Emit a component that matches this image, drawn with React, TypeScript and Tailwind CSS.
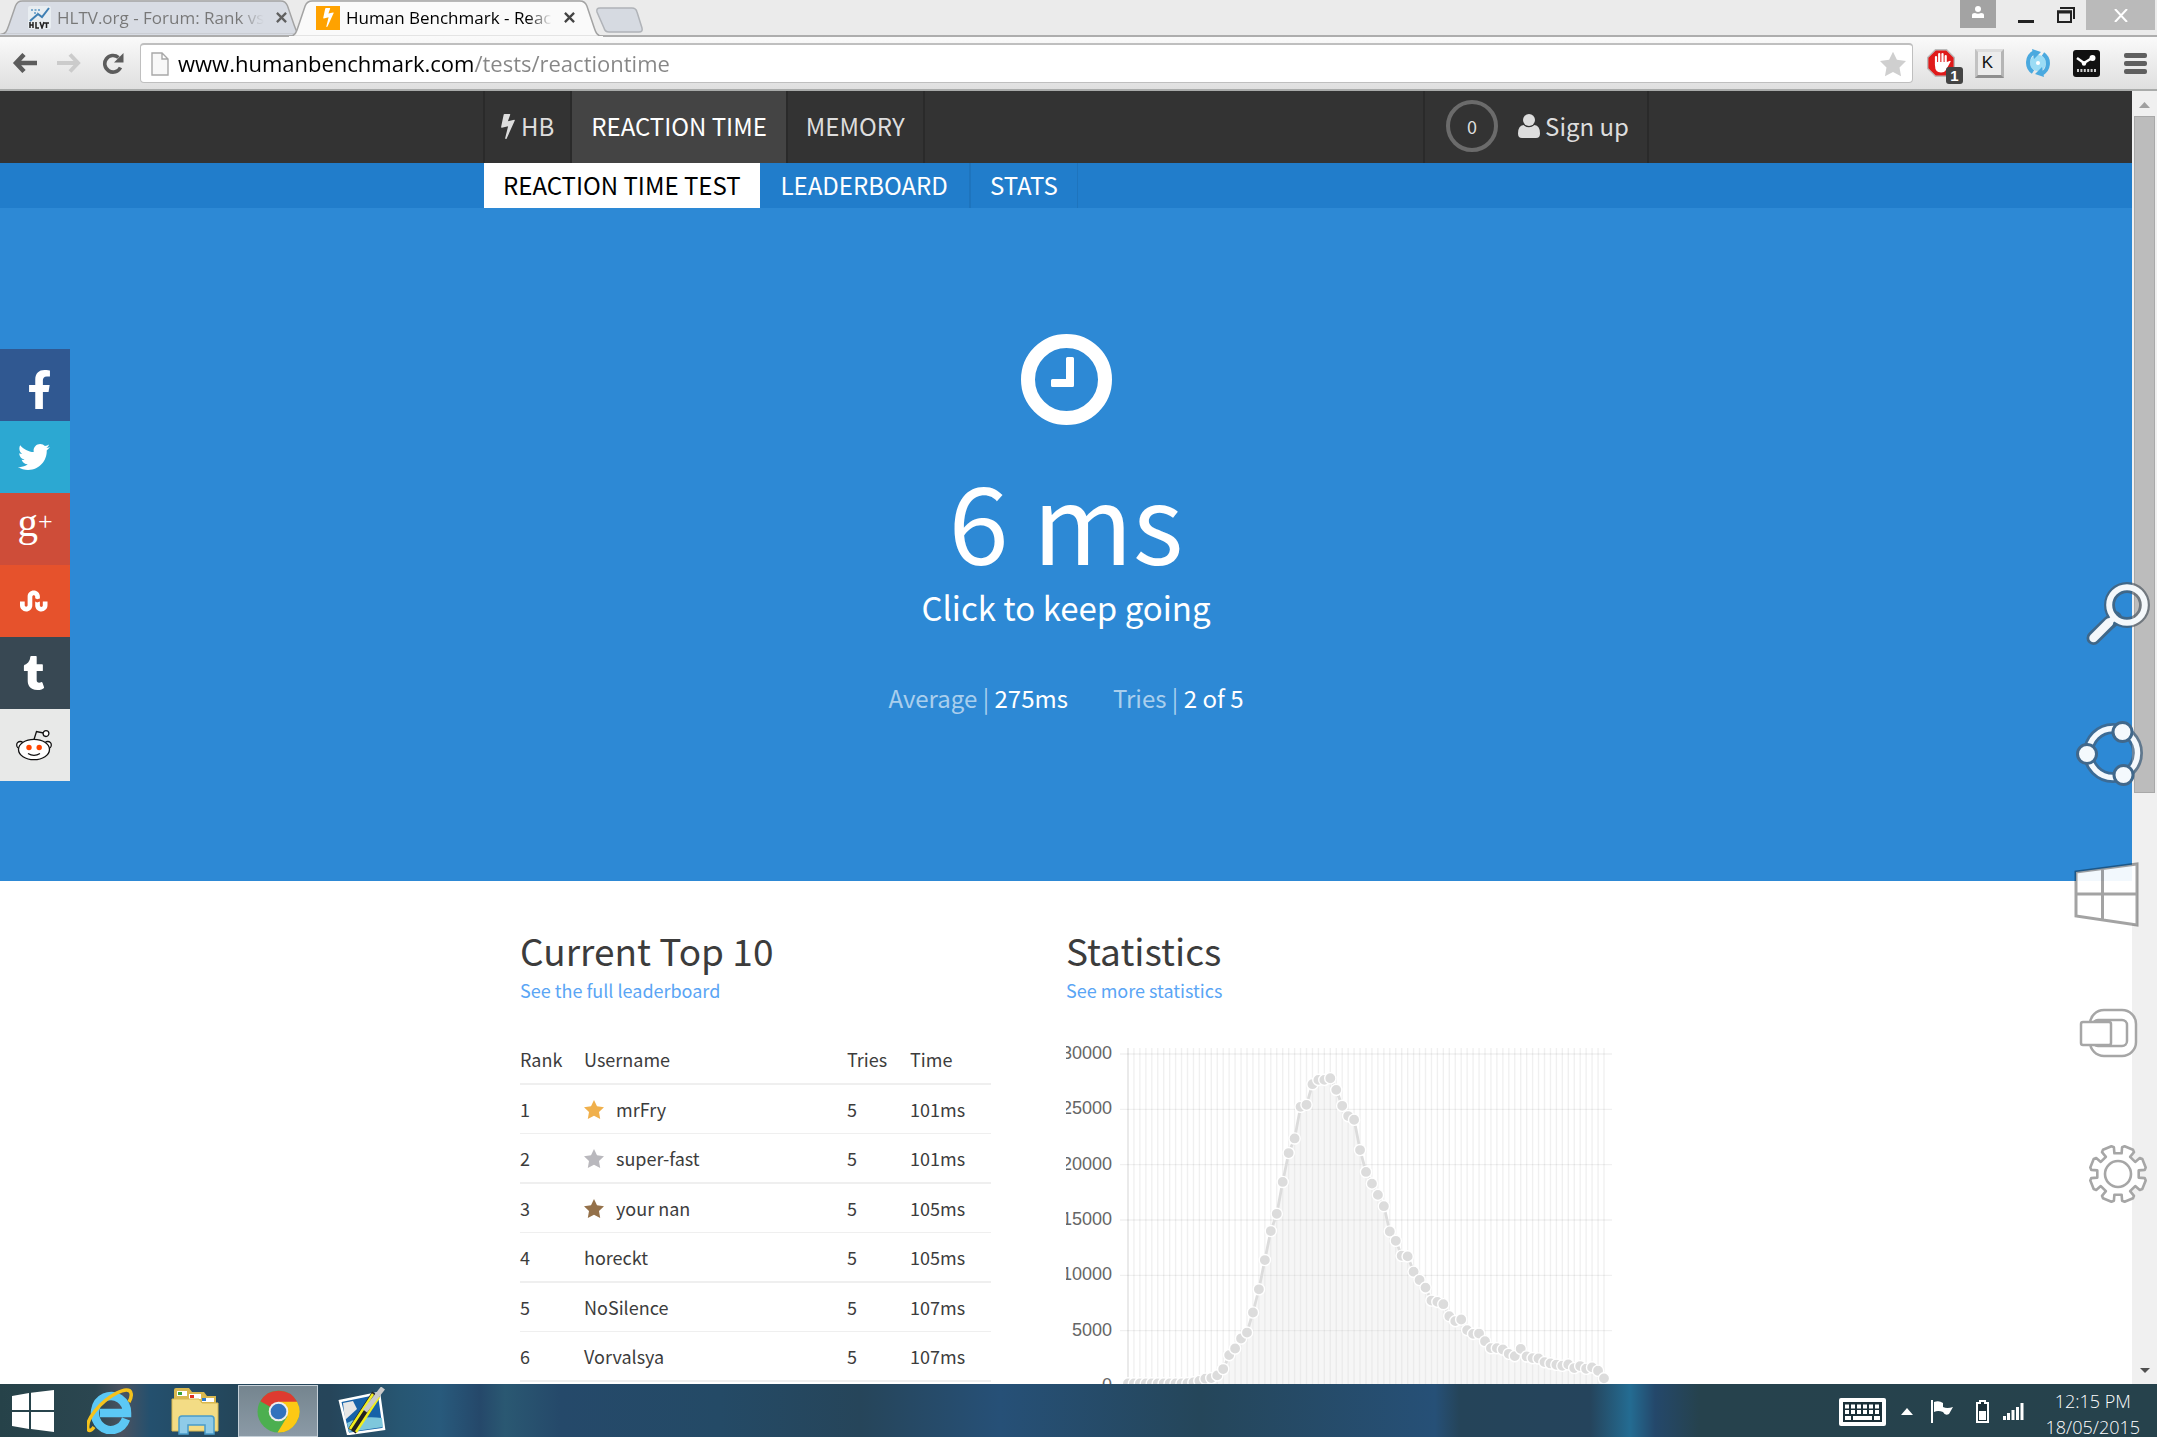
import React from 'react'
import { FaFacebookF, FaTwitter, FaStumbleupon, FaTumblr } from 'react-icons/fa'

interface Player {
  rank: number
  name: string
  tries: number
  time: string
  star?: string
}

const players: Player[] = [
  { rank: 1, name: 'mrFry', tries: 5, time: '101ms', star: 'text-[#f0b04c]' },
  { rank: 2, name: 'super-fast', tries: 5, time: '101ms', star: 'text-[#b9b8bd]' },
  { rank: 3, name: 'your nan', tries: 5, time: '105ms', star: 'text-[#94714a]' },
  { rank: 4, name: 'horeckt', tries: 5, time: '105ms' },
  { rank: 5, name: 'NoSilence', tries: 5, time: '107ms' },
  { rank: 6, name: 'Vorvalsya', tries: 5, time: '107ms' },
]

// number of results per bucket, fastest first
const results = [
  240, 240, 240, 240, 240, 240, 240, 240, 240, 240, 260, 330, 450, 660, 720, 960, 1530, 2790, 3390, 4290,
  4830, 6640, 8740, 11380, 14000, 15560, 18440, 21050, 22370, 25230, 25410, 27270, 27660, 27660, 27810,
  26760, 25320, 24390, 24060, 21320, 19340, 18290, 17270, 16250, 13960, 13120, 11770, 11710, 10330, 9580,
  8890, 7720, 7600, 7390, 6310, 5860, 6010, 5050, 4710, 4740, 4050, 3420, 3420, 3300, 2910, 2700, 3360,
  2670, 2520, 2490, 2160, 2040, 1920, 1830, 1950, 1620, 1800, 1560, 1680, 1380, 690,
]

const CHART = { left: 62, right: 538, base: 351, top: 19, max: 30000 }

function StatsChart() {
  const step = (CHART.right - CHART.left) / (results.length - 1)
  const px = (i: number) => CHART.left + i * step
  const py = (v: number) => CHART.base - (v / CHART.max) * (CHART.base - CHART.top)
  const line = results.map((v, i) => `${px(i).toFixed(1)},${py(v).toFixed(1)}`).join(' ')
  const ticks = [0, 5000, 10000, 15000, 20000, 25000, 30000]

  return (
    <svg viewBox="0 0 546 400" className="block w-full" role="img" aria-label="Reaction time distribution">
      {results.map((_, i) => (
        <line key={i} x1={px(i)} x2={px(i)} y1="13" y2="358" stroke="#000" strokeOpacity={i === 0 ? 0.12 : 0.06} strokeWidth="1.4" />
      ))}
      {ticks.map(t => (
        <g key={t}>
          <line x1="54" x2="546" y1={py(t)} y2={py(t)} stroke="#000" strokeOpacity="0.06" strokeWidth="1.4" />
          <text x="46" y={py(t) + 5} textAnchor="end" fill="#666" className="font-['Liberation_Sans',sans-serif] text-[18px]">
            {t}
          </text>
        </g>
      ))}
      <polygon points={`${CHART.left},${CHART.base} ${line} ${CHART.right},${CHART.base}`} fill="#dcdcdc" fillOpacity="0.25" />
      <polyline points={line} fill="none" stroke="#dcdcdc" strokeWidth="2.8" />
      {results.map((v, i) => (
        <circle key={i} cx={px(i)} cy={py(v)} r="5.6" fill="#dcdcdc" stroke="#fff" strokeWidth="1.4" />
      ))}
    </svg>
  )
}

function Star({ className }: { className: string }) {
  return (
    <svg viewBox="0 0 20 19" className={className} fill="currentColor">
      <path d="M10 0l3 6.3 7 .9-5 4.9 1.200 6.900L10 15.700 3.800 19 5 12.100 0 7.200l7-.9z" />
    </svg>
  )
}

function Bolt({ className }: { className: string }) {
  return (
    <svg viewBox="0 0 14 25" className={className} fill="currentColor">
      <path d="M3.500 0h5.200q.7.100.5.800L6.900 7.300l6.200-1.500q.9-.1.700.8L5.700 24.400q-.4.700-1.100.5-.6-.2-.4-.9L7.100 12.200.9 13.700q-.9.100-.8-.8L2.700.6q.2-.6.8-.6z" />
    </svg>
  )
}

function TabShape({ fill }: { fill: string }) {
  return (
    <svg viewBox="0 0 312 37" preserveAspectRatio="none" className="absolute inset-0 -z-10 h-full w-full">
      <path d="M0 36.500C6 36 7 33 9 27L16 6q2-5 7-5H289q5 0 7 5l7 21c2 6 3 9 9 9.500z" fill={fill} stroke="#a3a3a3" strokeWidth="1.500" />
      <path d="M0 37h312" stroke={fill} strokeWidth="2" />
    </svg>
  )
}

function TitleBar() {
  return (
    <div className="flex h-[37px] shrink-0 bg-[#ebebeb] shadow-[inset_0_-2px_0_#adadad]">
      <button className="relative isolate flex h-[35px] w-[303px] items-center pl-[28px] text-[17px] text-[#777]">
        <TabShape fill="#d8dce4" />
        <svg viewBox="0 0 23 23" className="mr-[6px] h-[23px] w-[23px]">
          <rect width="23" height="23" rx="2" fill="#e8edf1" />
          <path d="M2 15L10 8l4 3 7-9" fill="none" stroke="#3f7fb3" strokeWidth="2" />
          <path d="M3 4h9M6 7h4" stroke="#5c98c5" strokeWidth="1.500" strokeDasharray="2 1.500" />
          <path d="M2 16v6M5 16v6M2 19h3M8 16v6h3M12 16l2 6 2-6M16 17h5M18.500 17v5" fill="none" stroke="#222" strokeWidth="1.500" />
        </svg>
        <span className="w-[207px] overflow-hidden bg-[linear-gradient(90deg,#777_88%,transparent)] bg-clip-text text-left whitespace-nowrap text-transparent">
          HLTV.org - Forum: Rank vs
        </span>
        <svg viewBox="0 0 12 12" className="ml-[12px] h-[11px] w-[11px]" stroke="#606060" strokeWidth="2.500">
          <path d="M1 1l10 10M11 1L1 11" />
        </svg>
      </button>
      <button className="relative isolate z-10 -ml-[14px] flex h-[37px] w-[314px] items-center pb-[2px] pl-[27px] text-[17px] text-black">
        <TabShape fill="#fafafa" />
        <span className="mr-[6px] flex h-[24px] w-[24px] items-center justify-center bg-[#ffa200]">
          <Bolt className="h-[19px] w-[11px] text-white" />
        </span>
        <span className="w-[206px] overflow-hidden bg-[linear-gradient(90deg,#000_88%,transparent)] bg-clip-text text-left whitespace-nowrap text-transparent">
          Human Benchmark - Reac
        </span>
        <svg viewBox="0 0 12 12" className="ml-[12px] h-[11px] w-[11px]" stroke="#444" strokeWidth="2.500">
          <path d="M1 1l10 10M11 1L1 11" />
        </svg>
      </button>
      <button aria-label="New tab" className="-ml-[8px] self-start pt-[7px]">
        <svg viewBox="0 0 49 26" className="h-[26px] w-[49px]">
          <path d="M5 1h32q4 0 5 4l5 16q1 4-3 4H14q-4 0-5-4L2 5Q1 1 5 1z" fill="#d6dae1" stroke="#b0b3b8" strokeWidth="1.500" />
        </svg>
      </button>
      <div className="ml-auto flex">
        <button aria-label="User" className="flex h-[28px] w-[36px] justify-center bg-[#a3a3a3] pt-[6px]">
          <svg viewBox="0 0 12 12" className="h-[12px] w-[12px]" fill="#fff">
            <circle cx="6" cy="3" r="3" />
            <path d="M0 12V9q0-2 3-2 3 1.500 6 0 3 0 3 2v3z" />
          </svg>
        </button>
        <button aria-label="Minimize" className="ml-[22px] w-[16px]">
          <span className="mt-[5px] block h-[3px] bg-[#222]" />
        </button>
        <button aria-label="Restore" className="ml-[23px] flex w-[18px] pt-[7px]">
          <svg viewBox="0 0 18 16" className="h-[16px] w-[18px]" fill="none" stroke="#222">
            <path d="M3 1h14v11" strokeWidth="2" />
            <path d="M1 4.500h13V15H1z" strokeWidth="2" />
            <path d="M0 5h15" strokeWidth="3" />
          </svg>
        </button>
        <button aria-label="Close" className="mr-[2px] ml-[11px] flex h-[30px] w-[69px] items-center justify-center bg-[#bababa]">
          <svg viewBox="0 0 14 13" className="h-[13px] w-[14px]" stroke="#fff" strokeWidth="2">
            <path d="M1 0l12 13M13 0L1 13" />
          </svg>
        </button>
      </div>
    </div>
  )
}

function Toolbar() {
  return (
    <div className="flex h-[54px] shrink-0 items-center border-b-2 border-[#a9abaa] bg-linear-to-b from-[#fafafa] to-[#dfdfdf] pl-[12px]">
      <button aria-label="Back">
        <svg viewBox="0 0 26 20" className="h-[20px] w-[26px]" fill="none" stroke="#5c5c5c" strokeWidth="4.500">
          <path d="M12 1.500L4 10l8 8.500M4 10h21" />
        </svg>
      </button>
      <button aria-label="Forward" className="ml-[18px]">
        <svg viewBox="0 0 26 20" className="h-[20px] w-[26px]" fill="none" stroke="#cbcbcb" strokeWidth="4">
          <path d="M14 1.500L22 10l-8 8.500M22 10H1" />
        </svg>
      </button>
      <button aria-label="Reload" className="ml-[20px]">
        <svg viewBox="0 0 22 21" className="h-[21px] w-[22px]">
          <path d="M18.500 14.500A8.300 8.300 0 1 1 16.500 4.500" fill="none" stroke="#5c5c5c" strokeWidth="3.600" />
          <path d="M21.500 0v9.500H12z" fill="#5c5c5c" />
        </svg>
      </button>
      <div className="ml-[16px] flex h-[40px] flex-1 items-center rounded-[4px] border border-t-2 border-[#bfbfbf] bg-white pr-[6px] pl-[10px]">
        <svg viewBox="0 0 18 24" className="mr-[9px] h-[24px] w-[18px]" fill="#f8f8f8" stroke="#a8a8a8" strokeWidth="1.400">
          <path d="M1 1h10l6 6v16H1zM11 1v6h6" />
        </svg>
        <input
          aria-label="Address"
          defaultValue="www.humanbenchmark.com/tests/reactiontime"
          className="h-[36px] flex-1 bg-[linear-gradient(90deg,#000_297px,#868686_297px)] bg-clip-text pb-[2px] text-[22px] text-transparent outline-none"
        />
        <Star className="h-[26px] w-[26px] text-[#cfcfcf]" />
      </div>
      <div className="flex items-center gap-[21px] pr-[10px] pl-[14px]">
        <button aria-label="AdBlock" className="relative w-[27px]">
          <svg viewBox="0 0 28 28" className="h-[28px] w-[28px]">
            <path d="M8.500.7h11l7.800 7.800v11l-7.800 7.800h-11L.7 19.500v-11z" fill="#e01a1a" stroke="#bbb" strokeWidth="1.400" />
            <path d="M9 8v8M12.200 5v10M15.500 5v10M18.700 7v9" stroke="#fff" strokeWidth="2.200" strokeLinecap="round" />
            <path d="M8 13h11.800l1.500-.5q2-1.500 2.500-.2L19 21q-1.500 2.500-5 2.500-6 0-6-7z" fill="#fff" />
          </svg>
          <span className="absolute top-[18px] left-[19px] h-[17px] w-[17px] rounded-[3px] bg-[#444] text-center font-['Liberation_Sans',sans-serif] text-[15px] leading-[17px] font-bold text-white">
            1
          </span>
        </button>
        <button
          aria-label="Keys"
          className="h-[29px] w-[29px] border-[3px] border-t-[#ddd] border-r-[#b5b5b5] border-b-[#8f8f8f] border-l-[#c2c2c2] bg-[#ececec] pr-[4px] text-center font-['Liberation_Sans',sans-serif] text-[17px] leading-[20px] text-[#111]"
        >
          K
        </button>
        <button aria-label="Refresh all">
          <svg viewBox="0 0 26 28" className="h-[28px] w-[26px]">
            <circle cx="13" cy="14" r="8" fill="#9bdcf5" />
            <circle cx="13" cy="14" r="2" fill="#fff" />
            <path d="M10 3A11.500 11.500 0 0 0 8 23M16 25a11.500 11.500 0 0 0 2-20" fill="none" stroke="#4aa9df" strokeWidth="4" />
            <path d="M7 0l9 3-7 7zM19 28l-9-3 7-7z" fill="#4aa9df" />
          </svg>
        </button>
        <button aria-label="Steam" className="mx-[1px]">
          <svg viewBox="0 0 27 27" className="h-[27px] w-[27px]">
            <rect width="27" height="27" rx="3" fill="#111" />
            <path d="M4 8l7 5 8-5" fill="none" stroke="#fff" strokeWidth="2.500" />
            <circle cx="19.500" cy="8" r="3" fill="#fff" />
            <circle cx="11" cy="13.500" r="2.200" fill="#fff" />
            <path d="M4 20.500h19" stroke="#ccc" strokeWidth="3" strokeDasharray="2 1.400" />
          </svg>
        </button>
        <button aria-label="Menu" className="ml-[2px] flex w-[23px] flex-col gap-[3px]">
          <span className="h-[5px] rounded-[2px] bg-[#5f5f5f]" />
          <span className="h-[5px] rounded-[2px] bg-[#5f5f5f]" />
          <span className="h-[5px] rounded-[2px] bg-[#5f5f5f]" />
        </button>
      </div>
    </div>
  )
}

function SiteNav() {
  return (
    <header className="text-[24px]">
      <div className="bg-[#333] text-[#ddd]">
        <nav className="mx-auto flex h-[72px] w-full max-w-[1166px] border-x-2 border-[#2a2a2a]">
          <a href="#" className="flex items-center px-[16px] pb-[2px]">
            <Bolt className="mr-[6px] h-[25px] w-[14px]" />
            HB
          </a>
          <a href="#" className="flex items-center border-x-2 border-[#2a2a2a] bg-[#444] px-[19px] pb-[2px] text-white">
            REACTION TIME
          </a>
          <a href="#" className="flex items-center border-r-2 border-[#2a2a2a] px-[18px] pb-[2px]">
            MEMORY
          </a>
          <a href="#" className="ml-auto flex items-center border-l-2 border-[#2a2a2a] pr-[18px] pb-[2px] pl-[21px]">
            <span className="mr-[20px] flex h-[52px] w-[52px] items-center justify-center rounded-full border-4 border-[#6b6b6b] text-[18px]">
              0
            </span>
            <svg viewBox="0 0 22 24" className="mr-[5px] h-[24px] w-[22px]" fill="currentColor">
              <circle cx="11" cy="6" r="6" />
              <path d="M5.500 11q5.500 4.500 11 0Q22 11.500 22 19.500q0 4.500-4 4.500H4q-4 0-4-4.500Q0 11.500 5.500 11z" />
            </svg>
            Sign up
          </a>
        </nav>
      </div>
      <div className="bg-[#217dcb] text-white">
        <nav className="mx-auto flex h-[45px] w-full max-w-[1164px]">
          <a href="#" className="flex items-center bg-white px-[19px] pb-[2px] text-black">REACTION TIME TEST</a>
          <a href="#" className="flex items-center border-r-2 border-[#1e74bd] px-[21px] pb-[2px]">LEADERBOARD</a>
          <a href="#" className="flex items-center border-r border-[#1e74bd] px-[19px] pb-[2px]">STATS</a>
        </nav>
      </div>
    </header>
  )
}

function Hero() {
  return (
    <button className="block w-full bg-[#2d89d5] pt-[126px] pb-[167px] text-center text-white">
      <svg viewBox="0 0 91 91" className="mx-auto h-[91px] w-[91px]">
        <circle cx="45.500" cy="45.500" r="38.500" fill="none" stroke="#fff" strokeWidth="14" />
        <path d="M46.500 23h5q1.500 0 1.500 1.500v27q0 1.500-1.500 1.500h-20q-1.500 0-1.500-1.500v-5q0-1.500 1.500-1.500H45V24.500q0-1.500 1.500-1.500z" fill="#fff" />
      </svg>
      <h1 className="mt-[38px] text-[108px] leading-[110px]">6 ms</h1>
      <p className="mt-[12px] text-[33px] leading-[44px]">Click to keep going</p>
      <p className="mt-[53px] flex justify-center gap-[45px] text-[24px] leading-[32px]">
        <span>
          <span className="text-white/60">Average | </span>
          275ms
        </span>
        <span>
          <span className="text-white/60">Tries | </span>
          2 of 5
        </span>
      </p>
    </button>
  )
}

function Leaderboard() {
  return (
    <section className="pr-[75px]">
      <h2 className="text-[37px] leading-[44px]">Current Top 10</h2>
      <a href="#" className="block text-[18px] leading-[36px] text-[#5aa5f5]">See the full leaderboard</a>
      <table className="mt-[27px] w-full table-fixed border-separate border-spacing-0 text-left text-[18px]">
        <thead>
          <tr className="[&>th]:h-[50px] [&>th]:border-b-2 [&>th]:border-[#efefef] [&>th]:p-0 [&>th]:font-normal">
            <th className="w-[64px]">Rank</th>
            <th>Username</th>
            <th className="w-[63px]">Tries</th>
            <th className="w-[81px]">Time</th>
          </tr>
        </thead>
        <tbody>
          {players.map(p => (
            <tr
              key={p.rank}
              className="[&>td]:border-[#efefef] [&>td]:p-0 odd:[&>td]:h-[49px] odd:[&>td]:border-b even:[&>td]:h-[50px] even:[&>td]:border-b-2"
            >
              <td>{p.rank}</td>
              <td>
                <span className="flex items-center">
                  {p.star && <Star className={`mr-[12px] h-[19px] w-[20px] ${p.star}`} />}
                  {p.name}
                </span>
              </td>
              <td>{p.tries}</td>
              <td>{p.time}</td>
            </tr>
          ))}
        </tbody>
      </table>
    </section>
  )
}

function Reddit() {
  return (
    <svg viewBox="0 0 36 31" className="h-[31px] w-[36px]" fill="#fff" stroke="#111" strokeWidth="1.300">
      <circle cx="4.200" cy="15" r="3.500" />
      <circle cx="31.800" cy="15" r="3.500" />
      <path d="M18 9.500L20.500 1.500 27.500 3" fill="none" />
      <circle cx="30" cy="3.600" r="2.900" />
      <ellipse cx="18" cy="19.500" rx="15.500" ry="10.200" />
      <circle cx="13" cy="17.500" r="2.700" fill="#ff4500" stroke="none" />
      <circle cx="23.200" cy="17.500" r="2.700" fill="#ff4500" stroke="none" />
      <path d="M12 23.500q6 3.800 12 0" fill="none" />
    </svg>
  )
}

function ShareBar() {
  return (
    <div className="absolute top-[258px] left-0 w-[70px] text-white [&>a]:flex [&>a]:h-[72px] [&>a]:items-center [&>a]:justify-center">
      <a href="#" aria-label="Facebook" className="bg-[#305891] pt-[9px] pl-[9px]">
        <FaFacebookF size={39} />
      </a>
      <a href="#" aria-label="Twitter" className="bg-[#2ca8d2] pr-[2px]">
        <FaTwitter size={32} />
      </a>
      <a href="#" className="bg-[#ce4d39] pb-[14px] font-['Liberation_Serif',serif] text-[41px] leading-[40px]">
        <span>
          g<span className="align-[6px] text-[26px] leading-none">+</span>
        </span>
      </a>
      <a href="#" aria-label="StumbleUpon" className="bg-[#e6522c] pr-[2px]">
        <FaStumbleupon size={28} />
      </a>
      <a href="#" aria-label="Tumblr" className="bg-[#384853] pr-[2px]">
        <FaTumblr size={34} />
      </a>
      <a href="#" aria-label="Reddit" className="bg-[#e8e9e8] pr-[2px]">
        <Reddit />
      </a>
    </div>
  )
}

function Scrollbar() {
  return (
    <div className="flex w-[25px] shrink-0 flex-col items-center bg-[#f0f0f0]">
      <svg viewBox="0 0 11 6" className="mt-[11px] h-[6px] w-[11px]" fill="#a0a0a0">
        <path d="M0 6l5.500-6L11 6z" />
      </svg>
      <div className="mt-[8px] h-[677px] w-[21px] border border-[#a8a8a8] bg-[#bcbcbc]" />
      <svg viewBox="0 0 10 5" className="mt-auto mb-[11px] h-[5px] w-[10px]" fill="#505050">
        <path d="M0 0h10L5 5z" />
      </svg>
    </div>
  )
}

// eight-toothed cog outline around (47, 33)
const cog = Array.from({ length: 8 }, (_, i) => {
  const a = ((i * 45 + 22.5 - 90) * Math.PI) / 180
  const at = (r: number, d: number) => `${(47 + r * Math.cos(a + d)).toFixed(1)},${(33 + r * Math.sin(a + d)).toFixed(1)}`
  return [at(21, -0.22), at(27, -0.24), at(28.5, -0.16), at(28.5, 0.16), at(27, 0.24), at(21, 0.22)].join(' ')
}).join(' ')

function Charms() {
  return (
    <div className="pointer-events-none absolute top-[581px] right-[6px] flex flex-col gap-[74px]">
      <svg viewBox="0 0 80 66" className="h-[66px] w-[80px] overflow-visible" fill="none" strokeLinecap="round">
        <g stroke="#4a5560" opacity="0.65">
          <path d="M44 37l-6 5-15.500 15" strokeWidth="14" />
          <circle cx="56" cy="24" r="17.500" strokeWidth="11" />
        </g>
        <g stroke="#f4f8fb">
          <circle cx="56" cy="24" r="17.800" strokeWidth="6" />
          <path d="M43 37l-5 4" strokeWidth="6" />
          <path d="M38 41.500L22.500 57" strokeWidth="8.500" />
        </g>
      </svg>
      <svg viewBox="0 0 80 66" className="h-[66px] w-[80px]">
        <g stroke="#41627f" opacity="0.75">
          <circle cx="42" cy="32" r="24.500" fill="none" strokeWidth="11" />
        </g>
        <circle cx="42" cy="32" r="24.500" fill="none" stroke="#f4f9fd" strokeWidth="5.500" />
        {[[16, 33], [51.5, 11], [52.5, 54]].map(([x, y]) => (
          <circle key={y} cx={x} cy={y} r="9.500" fill="#f4f9fd" stroke="#41688b" strokeWidth="3" />
        ))}
      </svg>
      <svg viewBox="0 0 80 66" className="h-[66px] w-[80px]">
        <path d="M5 11L66 3v61L5 55z" fill="#fff" fillOpacity="0.94" />
        <path d="M5 11L66 3v61L5 55zM31.500 8v51M5 33h61" fill="none" stroke="#000" strokeOpacity="0.36" strokeWidth="3" />
      </svg>
      <svg viewBox="0 0 80 66" className="h-[66px] w-[80px]" fill="#fff" stroke="#a6a6a6" strokeWidth="2.500">
        <rect x="19" y="9" width="46" height="46" rx="14" />
        <rect x="22" y="19" width="34" height="26" rx="5" />
        <rect x="10" y="21" width="30" height="23" rx="2" />
      </svg>
      <svg viewBox="0 0 80 66" className="h-[66px] w-[80px]" fill="#fff" stroke="#a6a6a6" strokeWidth="2.600" strokeLinejoin="round">
        <polygon points={cog} />
        <circle cx="47" cy="33" r="13" />
      </svg>
    </div>
  )
}

function Taskbar() {
  return (
    <footer className="relative z-10 flex h-[53px] shrink-0 items-center overflow-hidden bg-[linear-gradient(90deg,#264249_0,#2b4650_95px,#4a5260_122px,#24506e_150px,#24465a_235px,#26455a_330px,#275672_400px,#285a7c_440px,#25486a_480px,#2a5872_505px,#25496a_560px,#244a66_720px,#26455a_860px,#265077_1000px,#25465a_1200px,#265077_1435px,#254459_1460px,#25445c_1590px,#246c92_1630px,#24486b_1655px,#26424d_1700px,#26424c_100%)] text-white">
      <button aria-label="Start" className="ml-[12px]">
        <svg viewBox="0 0 42 42" className="h-[42px] w-[42px]" fill="#fff">
          <path d="M0 6l17-3v17H0zM19 2.700L42 0v20H19zM0 22h17v17L0 36zM19 22h23v20l-23-3z" />
        </svg>
      </button>
      <button aria-label="Internet Explorer" className="ml-[33px]">
        <svg viewBox="0 0 46 46" className="h-[46px] w-[46px]" fill="none">
          <path d="M39 31A16 17 0 1 1 40 25H13" stroke="#5cc8f5" strokeWidth="8.500" />
          <path d="M7 39C1 48-4 38 8 23S42-4 44 5q1 4-2 9" stroke="#f5c21c" strokeWidth="3.500" />
        </svg>
      </button>
      <button aria-label="File Explorer" className="ml-[38px]">
        <svg viewBox="0 0 48 48" className="h-[48px] w-[48px]">
          <path d="M3 3q0-2 2-2h13l3 4h12l3 4h9v34H3z" fill="#d9b84f" />
          <path d="M6 4h10v5H6z" fill="#fff" />
          <path d="M7 5h4v3H7z" fill="#3aa23a" />
          <path d="M18 7h12v5H18z" fill="#fff" />
          <path d="M19 8h4v3h-4z" fill="#e03020" />
          <path d="M31 11h12v4H31z" fill="#fff" />
          <path d="M31 11h4v3h-4z" fill="#2a7ad0" />
          <path d="M1 12h27l3 4h16v28H1z" fill="#f3dc85" stroke="#d8b850" />
          <path d="M8 47V32q0-3 3-3h29q3 0 3 3v15h-9v-9H17v9z" fill="#8fcbe8" stroke="#4a9cc9" strokeWidth="1.500" />
        </svg>
      </button>
      <button aria-label="Chrome" className="ml-[19px] flex h-[52px] w-[80px] items-center justify-center self-end border border-[#c5d0d8] bg-linear-to-b from-[#75858f] to-[#8b9aa6]">
        <svg viewBox="0 0 44 44" className="h-[43px] w-[43px]">
          <circle cx="22" cy="22" r="21.500" fill="#4caf50" />
          <path d="M22 22L3.500 11.500A21.500 21.500 0 0 1 41 12z" fill="#de3b30" />
          <path d="M22 12h19A21.500 21.500 0 0 1 21 43.500L31 27z" fill="#fdc914" />
          <circle cx="22" cy="22" r="10" fill="#eee" />
          <circle cx="22" cy="22" r="8" fill="#3272bd" />
        </svg>
      </button>
      <button aria-label="Paint" className="ml-[20px]">
        <svg viewBox="0 0 48 48" className="h-[48px] w-[48px]">
          <path d="M2 14l39-8 5 36-36 5z" fill="#1762a8" stroke="#fff" strokeWidth="2.500" />
          <path d="M9 36q14-8 35-5l1 9-34 5z" fill="#7ec7dc" />
          <path d="M5 16l10-2 4 8-12 11z" fill="#e6e6e6" />
          <path d="M14 44L38 7" stroke="#222" strokeWidth="9" />
          <path d="M12 42L35 7M18 45L41 10" stroke="#f2ee1c" strokeWidth="2.500" />
          <path d="M27 24L45 1" stroke="#c9c9c9" strokeWidth="5" />
        </svg>
      </button>
      <div className="ml-auto flex items-center pt-[2px] pr-[17px]">
        <svg viewBox="0 0 47 28" className="h-[28px] w-[47px]">
          <rect width="47" height="28" rx="2" fill="#fff" />
          <rect x="4" y="4" width="39" height="20" fill="#1c3038" />
          <path d="M6 8.500h36M6 14h36" stroke="#fff" strokeWidth="4" strokeDasharray="4 2" />
          <path d="M6 20h6M14 20h19M35 20h6" stroke="#fff" strokeWidth="4" />
        </svg>
        <svg viewBox="0 0 12 7" className="ml-[15px] h-[7px] w-[12px]" fill="#fff">
          <path d="M0 7l6-7 6 7z" />
        </svg>
        <svg viewBox="0 0 24 23" className="ml-[18px] h-[23px] w-[24px]" fill="#fff">
          <path d="M0 0h2v23H0zM3 2q5-2 9 1v4q4 2 10 0l-4 7q-4 2-6-2-5-2-9 0z" />
        </svg>
        <svg viewBox="0 0 13 23" className="ml-[21px] h-[23px] w-[13px]">
          <path d="M4 1h5v2h3v19H1V3h3z" fill="#1c3038" stroke="#fff" strokeWidth="2" />
          <path d="M3 11h7v9H3z" fill="#fff" />
        </svg>
        <svg viewBox="0 0 21 17" className="ml-[14px] h-[17px] w-[21px]" fill="#fff">
          <path d="M0 13h3v4H0zM4 10h3v7H4zM8.500 7h3v10h-3zM13 4h3v13h-3zM17.500 0h3v17h-3z" />
        </svg>
        <p className="ml-[22px] pt-[4px] text-center font-['Open_Sans',sans-serif] text-[18px] leading-[26px] font-light">
          12:15 PM
          <br />
          18/05/2015
        </p>
      </div>
    </footer>
  )
}

export default function App() {
  return (
    <div className="relative flex h-screen flex-col overflow-hidden font-['Open_Sans',sans-serif]">
      <TitleBar />
      <Toolbar />
      <div className="relative flex min-h-0 flex-1 bg-white font-['Noto_Sans_CJK_SC','Source_Sans_Pro',sans-serif]">
        <div className="min-w-0 flex-1 overflow-hidden">
          <SiteNav />
          <Hero />
          <main className="mx-auto grid w-full max-w-[1092px] grid-cols-2 pt-[47px] text-[#3c3c3c]">
            <Leaderboard />
            <section>
              <h2 className="text-[37px] leading-[44px]">Statistics</h2>
              <a href="#" className="mb-[27px] block text-[18px] leading-[36px] text-[#5aa5f5]">See more statistics</a>
              <StatsChart />
            </section>
          </main>
        </div>
        <ShareBar />
        <Scrollbar />
      </div>
      <Charms />
      <Taskbar />
    </div>
  )
}
